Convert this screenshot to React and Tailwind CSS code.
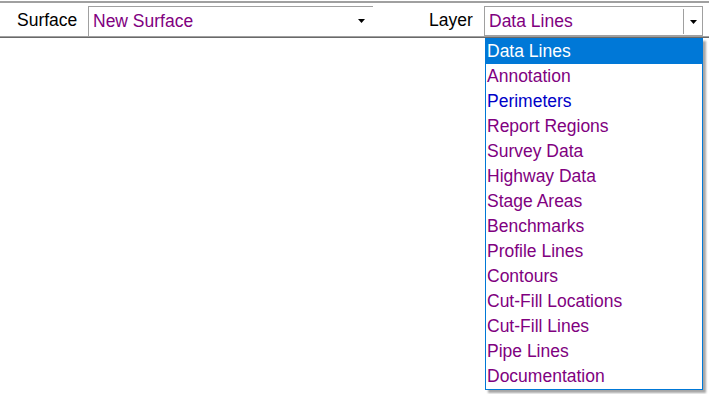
import React from "react";

const items = [
  { t: "Data Lines", c: "sel" },
  { t: "Annotation", c: "p" },
  { t: "Perimeters", c: "b" },
  { t: "Report Regions", c: "p" },
  { t: "Survey Data", c: "p" },
  { t: "Highway Data", c: "p" },
  { t: "Stage Areas", c: "p" },
  { t: "Benchmarks", c: "p" },
  { t: "Profile Lines", c: "p" },
  { t: "Contours", c: "p" },
  { t: "Cut-Fill Locations", c: "p" },
  { t: "Cut-Fill Lines", c: "p" },
  { t: "Pipe Lines", c: "p" },
  { t: "Documentation", c: "p" },
];

function Arrow() {
  return (
    <svg width="7" height="4" viewBox="0 0 7 4" className="block">
      <path d="M0 0H7L3.5 4Z" fill="#000" />
    </svg>
  );
}

export default function App() {
  return (
    <div
      className="relative w-[709px] h-[394px] bg-white overflow-hidden"
      style={{ fontFamily: '"Liberation Sans", Arial, sans-serif' }}
    >
      <div className="mt-[1px] border-t-2 border-[#a0a0a0]">
        <div className="flex items-start h-[33px] pt-[3px]">
          <div className="ml-[17px] w-[71px] h-[29px] flex items-center text-[17.5px] text-black">
            Surface
          </div>
          <div className="w-[285px] h-[30px] border-l border-t border-[#a0a0a0] flex items-center pl-[4px] pr-[8px]">
            <span className="flex-1 text-[17.5px] text-[#800080]">New Surface</span>
            <span className="mb-[2px]"><Arrow /></span>
          </div>
          <div className="ml-[56px] w-[55px] h-[29px] flex items-center text-[17.5px] text-black">
            Layer
          </div>
          <div className="w-[219px] h-[30px] border border-[#a0a0a0] flex items-stretch">
            <div className="flex-1 flex items-center pl-[4px] text-[17.5px] text-[#800080]">
              Data Lines
            </div>
            <div className="w-[19px] mt-[2px] mb-[1px] border-l border-[#a0a0a0] flex items-center justify-center">
              <Arrow />
            </div>
          </div>
        </div>
        <div className="border-t border-[#a0a0a0]" />
        <div className="border-t border-[#696969]" />
      </div>

      <div className="absolute left-[485px] top-[38px] w-[218px] border border-[#0078d7] bg-white shadow-[3px_3px_2px_rgba(0,0,0,0.35)]">
        {items.map((it) => (
          <div
            key={it.t}
            className={
              "h-[25px] flex items-center pl-[1px] text-[17.5px] leading-none " +
              (it.c === "sel"
                ? "bg-[#0078d7] text-white"
                : it.c === "b"
                ? "text-[#0000c8]"
                : "text-[#800080]")
            }
          >
            {it.t}
          </div>
        ))}
      </div>
    </div>
  );
}
